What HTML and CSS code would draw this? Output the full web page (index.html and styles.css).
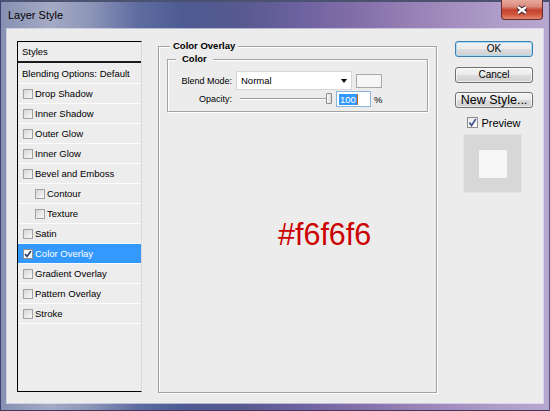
FILE: index.html
```html
<!DOCTYPE html>
<html>
<head>
<meta charset="utf-8">
<link rel="stylesheet" href="styles.css">
</head>
<body>
<div class="window">
  <div class="titlebar">
    <span class="title">Layer Style</span>
    <div class="close">
      <svg width="14" height="10" viewBox="0 0 14 10">
        <path d="M3 2 L11 8 M11 2 L3 8" stroke="#3b1e2e" stroke-width="4.2" fill="none"/>
        <path d="M3 2 L11 8 M11 2 L3 8" stroke="#ffffff" stroke-width="2.2" fill="none"/>
      </svg>
    </div>
  </div>
  <div class="client">
    <div class="styles-list">
      <div class="row header">Styles</div>
      <div class="row blending">Blending Options: Default</div>
      <div class="row"><span class="cb"></span>Drop Shadow</div>
      <div class="row"><span class="cb"></span>Inner Shadow</div>
      <div class="row"><span class="cb"></span>Outer Glow</div>
      <div class="row"><span class="cb"></span>Inner Glow</div>
      <div class="row"><span class="cb"></span>Bevel and Emboss</div>
      <div class="row sub"><span class="cb"></span>Contour</div>
      <div class="row sub"><span class="cb"></span>Texture</div>
      <div class="row"><span class="cb"></span>Satin</div>
      <div class="row selected"><span class="cb checked"><svg width="8" height="8" viewBox="0 0 8 8"><path d="M1 4 L3 6.5 L7 1" stroke="#2b3a6a" stroke-width="1.6" fill="none"/></svg></span>Color Overlay</div>
      <div class="row"><span class="cb"></span>Gradient Overlay</div>
      <div class="row"><span class="cb"></span>Pattern Overlay</div>
      <div class="row"><span class="cb"></span>Stroke</div>
    </div>

    <fieldset class="group outer">
      <legend>Color Overlay</legend>
      <fieldset class="group inner">
        <legend>Color</legend>
        <div class="field-row first">
          <span class="field-label">Blend Mode:</span>
          <div class="select"><span>Normal</span><span class="arrow"></span></div>
          <div class="swatch"></div>
        </div>
        <div class="field-row second">
          <span class="field-label">Opacity:</span>
          <div class="slider"><span class="thumb"></span></div>
          <div class="num"><span class="sel">100</span><span class="caret"></span></div>
          <span class="pct">%</span>
        </div>
      </fieldset>
      <div class="annotation">#f6f6f6</div>
    </fieldset>

    <div class="side">
      <button class="btn default">OK</button>
      <button class="btn cancel">Cancel</button>
      <button class="btn large">New Style...</button>
      <div class="preview-check"><span class="cb2"><svg width="9" height="9" viewBox="0 0 9 9"><path d="M1.5 4.5 L3.5 7.5 L7.8 1" stroke="#3b4f8c" stroke-width="1.6" fill="none"/></svg></span>Preview</div>
      <div class="preview-box"><div class="preview-swatch"></div></div>
    </div>
  </div>
</div>
</body>
</html>
```

FILE: styles.css
```css
* { box-sizing: border-box; }

html, body {
  margin: 0;
  padding: 0;
}

body {
  width: 550px;
  height: 411px;
  overflow: hidden;
  font-family: "Liberation Sans", Arial, sans-serif;
  color: #000;
}

.window {
  width: 550px;
  height: 411px;
  display: flex;
  flex-direction: column;
  background:
    linear-gradient(90deg, #8790b2 0%, #a4aac4 9%, #8e96b8 16%, #5e6ca0 25%, #4d5b92 33%, #57598f 44%, #6e62a0 55%, #8570aa 66%, #9c86b9 78%, #ae9bc8 90%, #b7a8cf 100%);
  border-top: 2px solid #4a5270;
  border-left: 1px solid #3c4170;
  border-right: 1px solid #5b4f7a;
  border-bottom: 1px solid #40365e;
}

.titlebar {
  height: 27px;
  display: flex;
  align-items: flex-start;
  flex: none;
}

.title {
  font-size: 11px;
  line-height: 12px;
  margin: 7px 0 0 7px;
  color: #000;
}

.close {
  margin-left: auto;
  margin-right: 6px;
  margin-top: -2px;
  width: 42px;
  height: 20px;
  border: 1px solid #6b2b2b;
  border-top: none;
  border-radius: 0 0 4px 4px;
  background: linear-gradient(#e6a99c 0%, #da8a7a 35%, #c5432f 52%, #cf553c 75%, #e08a70 100%);
  display: flex;
  align-items: center;
  justify-content: center;
  padding-top: 1px;
}

.client {
  flex: 1;
  margin: 0 6px 7px 6px;
  background: #ececec;
  display: flex;
  align-items: flex-start;
  padding: 12px 10px 0 10px;
  box-shadow: 0 0 0 1px rgba(255, 255, 255, 0.55);
}

/* Styles list */
.styles-list {
  width: 125px;
  height: 351px;
  flex: none;
  border: 1px solid #000;
  border-right-color: #dadada;
  background: #ededed;
}

.row {
  height: 20px;
  display: flex;
  align-items: center;
  font-size: 9.5px;
  padding-left: 5px;
  border-bottom: 1px solid #fbfbfb;
  white-space: nowrap;
}

.row.header {
  height: 21px;
  padding-left: 4px;
  border-bottom: 2px solid #1b1b1b;
}

.row.blending {
  height: 21px;
  padding-left: 4px;
}

.row.sub {
  padding-left: 17px;
}

.row.selected {
  background: #3399ff;
  color: #fff;
  border-bottom-color: #fbfbfb;
}

.cb {
  width: 10px;
  height: 10px;
  border: 1px solid #a2a2a2;
  background: linear-gradient(135deg, #d6d6d6 0%, #efefef 70%, #f7f7f7 100%);
  margin-right: 2px;
  flex: none;
  display: flex;
  align-items: center;
  justify-content: center;
}

.cb.checked {
  background: #fafafa;
  border-color: #8e8e8e;
}

/* Group boxes */
.group {
  margin: 0;
  border: 1px solid #a3a3a3;
  box-shadow: 1px 1px 0 #ffffff, inset 1px 1px 0 #ffffff;
  min-width: 0;
}

.group legend {
  font-weight: bold;
  font-size: 9.5px;
  line-height: 12px;
  background: #ececec;
}

.outer {
  width: 279px;
  height: 353px;
  margin-left: 16px;
  margin-top: -1px;
  padding: 0 8px;
  flex: none;
}

.outer > legend {
  margin-left: 3px;
  padding: 0 3px;
}

.inner {
  width: 261px;
  height: 59px;
  margin-top: 1px;
  padding: 0 8px 0 8px;
}

.inner > legend {
  margin-left: 0;
  padding: 0 6px;
}

.field-row {
  display: flex;
  align-items: center;
  font-size: 9px;
}

.field-row.first {
  height: 19px;
  margin-top: 6px;
}

.field-row.second {
  height: 16px;
  margin-top: 1px;
}

.field-label {
  width: 56px;
  text-align: right;
  margin-right: 4px;
  flex: none;
}

.select {
  width: 116px;
  height: 19px;
  background: #ffffff;
  border: 1px solid #d6d6d6;
  display: flex;
  align-items: center;
  justify-content: space-between;
  padding: 0 4px 0 4px;
  font-size: 9.5px;
}

.arrow {
  width: 0;
  height: 0;
  border-left: 3.5px solid transparent;
  border-right: 3.5px solid transparent;
  border-top: 4px solid #000;
}

.swatch {
  width: 26px;
  height: 14px;
  margin-left: 4px;
  background: #f6f6f6;
  border: 1px solid #a7a7a7;
}

.slider {
  width: 92px;
  height: 12px;
  margin-left: 4px;
  display: flex;
  justify-content: flex-end;
  background:
    linear-gradient(#9c9c9c, #9c9c9c) no-repeat 0 5px / 88px 1px,
    linear-gradient(#ffffff, #ffffff) no-repeat 0 6px / 88px 1px;
}

.thumb {
  width: 6px;
  height: 11px;
  border: 1px solid #8c8c8c;
  border-radius: 1px;
  background: linear-gradient(90deg, #ffffff, #d5d5d5);
}

.num {
  width: 35px;
  height: 16px;
  margin-left: 4px;
  border: 1px solid #8fb2d8;
  background: #ffffff;
  display: flex;
  align-items: center;
  padding-left: 2px;
}

.sel {
  background: #3399ff;
  color: #ffffff;
  font-size: 9.5px;
  line-height: 11px;
  padding: 0 1px;
}

.caret {
  width: 1px;
  height: 11px;
  background: #c8641e;
}

.pct {
  margin-left: 3px;
  font-size: 9.5px;
}

.annotation {
  margin: 107px 0 0 111px;
  font-size: 30.5px;
  line-height: 30px;
  color: #cc0000;
}

/* Right column */
.side {
  width: 78px;
  margin-left: 18px;
  display: flex;
  flex-direction: column;
  align-items: center;
  flex: none;
}

.btn {
  width: 78px;
  height: 16px;
  padding: 0;
  margin: 0;
  font-family: "Liberation Sans", Arial, sans-serif;
  font-size: 10px;
  line-height: 14px;
  color: #000;
  border: 1px solid #707070;
  border-radius: 3px;
  background: linear-gradient(#f3f3f3 0%, #ebebeb 48%, #dddddd 52%, #cfcfcf 100%);
  box-shadow: inset 0 0 0 1px rgba(255, 255, 255, 0.6);
}

.btn.default {
  border-color: #3c7fb1;
  box-shadow: inset 0 0 0 1px #a6dcf5;
  margin-bottom: 10px;
}

.btn.cancel {
  margin-bottom: 9px;
}

.btn.large {
  font-size: 12.5px;
}

.preview-check {
  display: flex;
  align-items: center;
  height: 13px;
  margin-top: 8px;
  font-size: 11px;
}

.cb2 {
  width: 11px;
  height: 11px;
  border: 1px solid #8e8f8f;
  background: linear-gradient(135deg, #e8e8e8, #ffffff);
  margin-right: 3px;
  display: flex;
  align-items: center;
  justify-content: center;
}

.preview-box {
  width: 59px;
  height: 59px;
  margin-top: 5px;
  margin-right: 3px;
  background: #d7d7d7;
  border: 1px solid #e3e3e3;
  display: flex;
  align-items: center;
  justify-content: center;
}

.preview-swatch {
  width: 28px;
  height: 28px;
  background: #f6f6f6;
}
```
